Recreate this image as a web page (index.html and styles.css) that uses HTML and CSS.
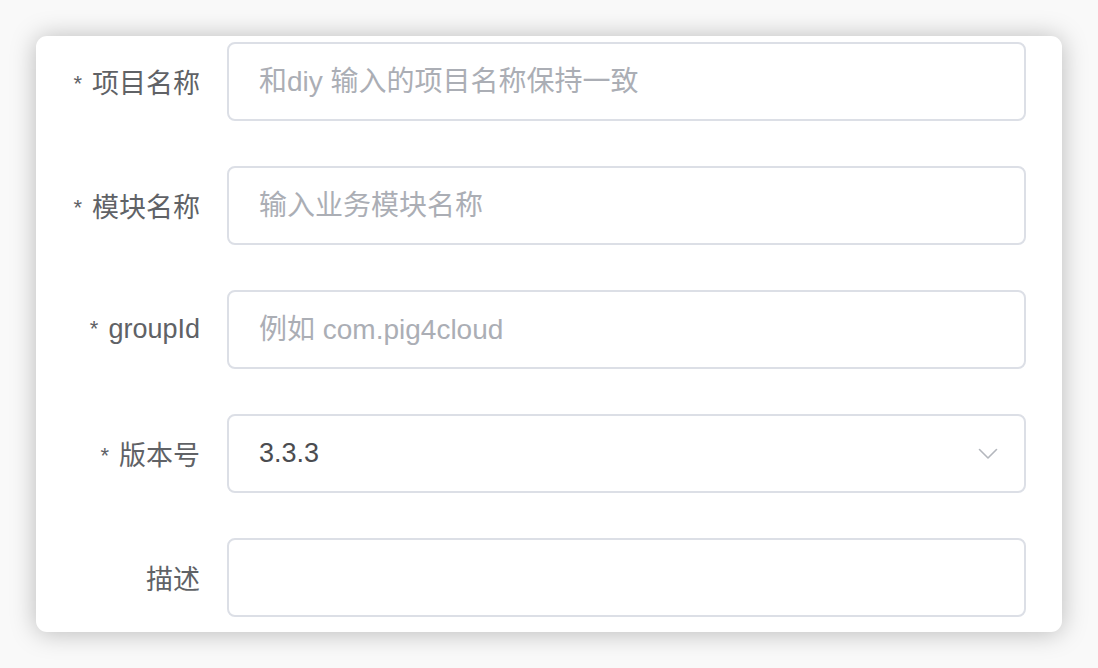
FILE: index.html
```html
<!DOCTYPE html>
<html lang="zh-CN">
<head>
    <meta charset="UTF-8">
    <meta name="viewport" content="width=device-width, initial-scale=1.0">
    <title>新建项目</title>
    <link rel="stylesheet" href="styles.css">
</head>
<body>
    <div class="card">
        <form class="form">
            <div class="row">
                <label class="label" for="projectName"><span class="req">*</span>项目名称</label>
                <div class="field">
                    <input class="input" id="projectName" type="text" placeholder="和diy 输入的项目名称保持一致">
                </div>
            </div>
            <div class="row">
                <label class="label" for="moduleName"><span class="req">*</span>模块名称</label>
                <div class="field">
                    <input class="input" id="moduleName" type="text" placeholder="输入业务模块名称">
                </div>
            </div>
            <div class="row">
                <label class="label" for="groupId"><span class="req">*</span>groupId</label>
                <div class="field">
                    <input class="input" id="groupId" type="text" placeholder="例如 com.pig4cloud">
                </div>
            </div>
            <div class="row">
                <label class="label" for="version"><span class="req">*</span>版本号</label>
                <div class="field select">
                    <span class="select-value">3.3.3</span>
                    <svg class="chevron" width="20" height="12" viewBox="0 0 20 12">
                        <path d="M1.5 1.5 L10 10 L18.5 1.5" fill="none" stroke="#b4b7bd" stroke-width="1.6" stroke-linecap="round" stroke-linejoin="round"/>
                    </svg>
                </div>
            </div>
            <div class="row">
                <label class="label" for="desc">描述</label>
                <div class="field">
                    <input class="input" id="desc" type="text">
                </div>
            </div>
        </form>
    </div>
</body>
</html>
```

FILE: styles.css
```css
html, body {
    margin: 0;
    padding: 0;
}
body {
    background-color: #f9f9f9;
    font-family: "Liberation Sans", "Noto Sans CJK SC", sans-serif;
    padding: 36px;
    width: 1026px;
}
.card {
    background: #fff;
    border-radius: 11px;
    box-shadow: 0 1px 26px rgba(0, 0, 0, 0.26);
    height: 596px;
    overflow: hidden;
}
.form {
    padding-top: 6px;
    display: flex;
    flex-direction: column;
    gap: 45px;
}
.row {
    display: flex;
    align-items: center;
}
.label {
    width: 191px;
    box-sizing: border-box;
    padding-right: 27px;
    text-align: right;
    font-size: 27px;
    color: #606266;
}
.req {
    color: #606266;
    font-size: 22px;
    margin-right: 10px;
    vertical-align: 2px;
}
.field {
    width: 799px;
    height: 79px;
    box-sizing: border-box;
    border: 2px solid #dcdfe6;
    border-radius: 8px;
    display: flex;
    align-items: center;
    padding: 0 30px;
}
.input {
    border: none;
    outline: none;
    width: 100%;
    padding: 0;
    font-family: inherit;
    font-size: 28px;
    color: #303133;
    background: transparent;
}
.input::placeholder {
    color: #abaeb5;
}
.select {
    justify-content: space-between;
    padding-right: 26px;
}
.select-value {
    font-size: 27px;
    color: #4b4c50;
}
```
